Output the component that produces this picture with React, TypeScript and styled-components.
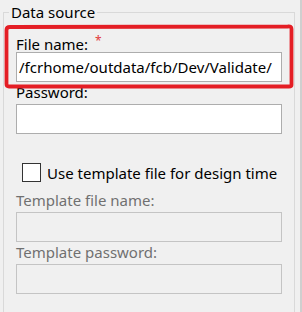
import React from "react";
import styled, { createGlobalStyle } from "styled-components";

const Global = createGlobalStyle`
  html, body { margin: 0; padding: 0; background: #f0f0f0; overflow: hidden; }
  body { font-family: "Noto Sans", "Open Sans", sans-serif; font-size: 15px; color: #000; }
`;

const Page = styled.div`
  position: relative;
  width: 302px;
  height: 312px;
  padding: 2px 5px 0 3px;
  box-sizing: border-box;
  border-right: 2px solid #cfcfcf;
  overflow: hidden;
`;

const Group = styled.fieldset`
  margin: 0;
  padding: 9px 12px 0 12px;
  border: 1px solid #d9d9d9;
  border-bottom: none;
  height: 340px;
  box-sizing: border-box;
  display: flex;
  flex-direction: column;
`;

const Legend = styled.legend`
  padding: 0 2px;
  margin-left: -7px;
  line-height: 20px;
  font-size: 15px;
  color: #000;
`;

const Label = styled.div<{ $disabled?: boolean }>`
  line-height: 19px;
  height: 19px;
  margin-bottom: 2px;
  color: ${(p) => (p.$disabled ? "#707070" : "#000")};
  white-space: nowrap;
`;

const Required = styled.span`
  color: #e23a3a;
  font-size: 12px;
  vertical-align: 5px;
  margin-left: 7px;
`;

const Input = styled.div<{ $disabled?: boolean }>`
  height: 30px;
  box-sizing: border-box;
  border: 1px solid ${(p) => (p.$disabled ? "#c4c4c4" : "#adadad")};
  background: ${(p) => (p.$disabled ? "#f0f0f0" : "#fff")};
  padding: 0 2px;
  display: flex;
  align-items: center;
  white-space: nowrap;
  overflow: hidden;
  margin-bottom: 1px;
  color: #000;
`;

const CheckRow = styled.label`
  display: flex;
  align-items: center;
  gap: 6px;
  height: 19px;
  margin: 28px 0 9px 6px;
  white-space: nowrap;
`;

const Box = styled.span`
  width: 19px;
  height: 19px;
  box-sizing: border-box;
  border: 1px solid #333;
  background: #fff;
  flex: none;
`;

const Highlight = styled.svg`
  position: absolute;
  left: 0;
  top: 0;
  pointer-events: none;
`;

export default function App() {
  return (
    <>
      <Global />
      <Page>
        <Group>
          <Legend>Data source</Legend>
          <Label>
            File name:<Required>*</Required>
          </Label>
          <Input>/fcrhome/outdata/fcb/Dev/Validate/</Input>
          <Label>Password:</Label>
          <Input />
          <CheckRow>
            <Box />
            Use template file for design time
          </CheckRow>
          <Label $disabled>Template file name:</Label>
          <Input $disabled />
          <Label $disabled>Template password:</Label>
          <Input $disabled />
        </Group>
        <Highlight width="302" height="312" viewBox="0 0 302 312">
          <path
            d="M6.5 30 Q6.5 27 10 27 L288 26.5 Q291.5 26 291.5 29 L291.5 85 Q291.5 86.5 289 86.5 L9 86.5 Q6.5 86.5 6.5 84 Z"
            fill="none"
            stroke="#e41e25"
            strokeWidth="3.8"
            strokeLinejoin="round"
          />
        </Highlight>
      </Page>
    </>
  );
}
